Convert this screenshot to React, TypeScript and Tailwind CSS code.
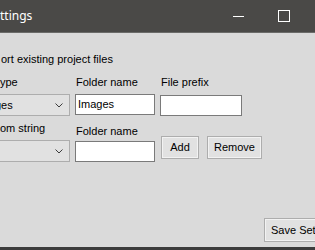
import React from 'react';

function Chevron() {
  return (
    <svg width="8" height="5" viewBox="0 0 8 5" className="shrink-0">
      <polyline points="0.5,0.5 4,4 7.5,0.5" fill="none" stroke="#3c3c3c" strokeWidth="1" />
    </svg>
  );
}

function Combo({ text }: { text?: string }) {
  return (
    <div className="w-[70px] h-[22px] border border-l-0 border-[#adadad] bg-[#e1e1e1] flex items-center overflow-hidden pr-[6px]">
      <span className="flex-1 -ml-[5px] whitespace-nowrap leading-[13px]">{text}</span>
      <Chevron />
    </div>
  );
}

function TextBox({ value, w = 'w-[80px]' }: { value?: string; w?: string }) {
  return (
    <div className={`${w} h-[21px] border border-[#7a7a7a] bg-white flex items-center px-[2px] leading-[13px]`}>
      {value}
    </div>
  );
}

function WinButton({ label, w }: { label: string; w: string }) {
  return (
    <button
      type="button"
      className={`${w} h-[23px] border border-[#adadad] bg-[#e1e1e1] shadow-[inset_0_0_0_1px_#f2f2f2] flex items-center justify-center leading-[13px] text-black whitespace-nowrap shrink-0`}
    >
      {label}
    </button>
  );
}

export default function App() {
  return (
    <div className="w-[315px] h-[250px] overflow-hidden bg-[#dadada] flex flex-col font-['Liberation_Sans',Arial,sans-serif] text-[11px] text-black">
      {/* Title bar */}
      <div className="h-[33px] shrink-0 bg-[#4a4947] border-b border-[#6b6b69] flex items-center">
        <span className="font-['Noto_Sans',sans-serif] text-[12px] text-white leading-none -mt-[1px]">ttings</span>
        <div className="ml-auto flex h-full">
          <div className="w-[46px] h-full flex items-center justify-center">
            <div className="w-[11px] h-px bg-white" />
          </div>
          <div className="w-[46px] h-full flex items-center justify-center">
            <div className="w-[12px] h-[12px] border-[1.5px] border-white" />
          </div>
          <div className="w-[8px] h-full" />
        </div>
      </div>

      {/* Content */}
      <p className="mt-[20px] leading-[13px] pl-[1px]">ort existing project files</p>

      <div className="mt-[10px] flex">
        <div className="w-[70px] flex flex-col">
          <span className="leading-[13px] mb-[5px]">ype</span>
          <Combo text="ges" />
        </div>
        <div className="ml-[5px] w-[80px] flex flex-col">
          <span className="leading-[13px] mb-[5px] pl-[1px]">Folder name</span>
          <TextBox value="Images" />
        </div>
        <div className="ml-[5px] w-[82px] flex flex-col">
          <span className="leading-[13px] mb-[6px] pl-[1px]">File prefix</span>
          <TextBox w="w-[82px]" />
        </div>
      </div>

      <div className="mt-[6px] flex items-start">
        <div className="w-[70px] flex flex-col">
          <span className="leading-[13px] mb-[5px]">om string</span>
          <Combo />
        </div>
        <div className="ml-[5px] w-[80px] flex flex-col mt-[3px]">
          <span className="leading-[13px] mb-[3px] pl-[1px]">Folder name</span>
          <TextBox />
        </div>
        <div className="ml-[6px] mt-[14px] flex gap-[8px]">
          <WinButton label="Add" w="w-[38px]" />
          <WinButton label="Remove" w="w-[55px]" />
        </div>
      </div>

      <div className="mt-auto flex pl-[264px] mb-[5px]">
        <WinButton label="Save Settings" w="w-[84px] h-[24px] justify-start pl-[6px]" />
      </div>
      <div className="h-[3px] shrink-0 bg-[#3c3c3c]" />
    </div>
  );
}
